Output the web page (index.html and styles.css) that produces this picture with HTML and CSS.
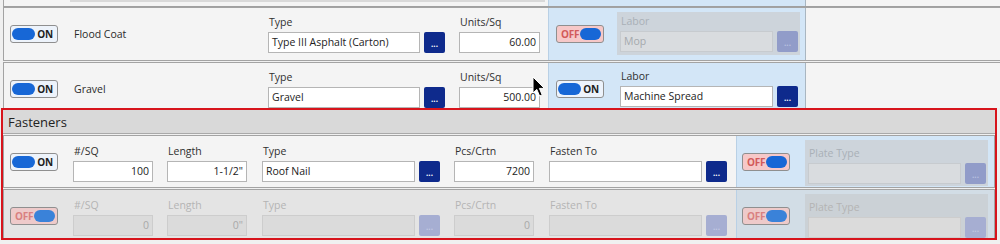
FILE: index.html
```html
<!DOCTYPE html>
<html lang="en">
<head>
<meta charset="UTF-8" />
<title>Roof Components</title>
<link rel="stylesheet" href="styles.css">
</head>
<body>
<div class="stub">
  <div class="stub-gray"></div>
  <div class="stub-panel"></div>
</div>

<!-- Flood Coat -->
<div class="row">
  <div class="toggle on"><span class="knob"></span><span class="state">ON</span></div>
  <div class="name">Flood Coat</div>
  <div class="field">
    <label>Type</label>
    <div class="pick"><div class="input w152">Type III Asphalt (Carton)</div><div class="dots"><span>...</span></div></div>
  </div>
  <div class="field units">
    <label>Units/Sq</label>
    <div class="input w81 num">60.00</div>
  </div>
  <div class="panel">
    <div class="toggle off"><span class="state">OFF</span><span class="knob"></span></div>
    <div class="box field disabled">
      <label>Labor</label>
      <div class="pick"><div class="input w153">Mop</div><div class="dots"><span>...</span></div></div>
    </div>
  </div>
  <div class="rest"></div>
</div>

<!-- Gravel -->
<div class="row-clip">
  <div class="row">
    <div class="toggle on"><span class="knob"></span><span class="state">ON</span></div>
    <div class="name">Gravel</div>
    <div class="field">
      <label>Type</label>
      <div class="pick"><div class="input w152">Gravel</div><div class="dots"><span>...</span></div></div>
    </div>
    <div class="field units">
      <label>Units/Sq</label>
      <div class="input w81 num">500.00</div>
    </div>
    <div class="panel">
      <div class="toggle on"><span class="knob"></span><span class="state">ON</span></div>
      <div class="box field">
        <label>Labor</label>
        <div class="pick"><div class="input w153">Machine Spread</div><div class="dots"><span>...</span></div></div>
      </div>
    </div>
    <div class="rest"></div>
  </div>
</div>

<!-- Fasteners group -->
<div class="fasteners">
  <div class="group-head">Fasteners</div>

  <div class="frow">
    <div class="toggle on"><span class="knob"></span><span class="state">ON</span></div>
    <div class="field f-first">
      <label>#/SQ</label>
      <div class="input w80 num">100</div>
    </div>
    <div class="field f-next">
      <label>Length</label>
      <div class="input w80 num">1-1/2"</div>
    </div>
    <div class="field f-wide">
      <label>Type</label>
      <div class="pick"><div class="input w153">Roof Nail</div><div class="dots"><span>...</span></div></div>
    </div>
    <div class="field f-next">
      <label>Pcs/Crtn</label>
      <div class="input w80 num">7200</div>
    </div>
    <div class="field f-wide">
      <label>Fasten To</label>
      <div class="pick"><div class="input w153"></div><div class="dots"><span>...</span></div></div>
    </div>
    <div class="panel fpanel">
      <div class="toggle off"><span class="state">OFF</span><span class="knob"></span></div>
      <div class="box plate field disabled">
        <label>Plate Type</label>
        <div class="pick"><div class="input w153"></div><div class="dots"><span>...</span></div></div>
      </div>
    </div>
  </div>

  <div class="frow-clip">
    <div class="frow off-row">
      <div class="toggle off"><span class="state">OFF</span><span class="knob"></span></div>
      <div class="field f-first disabled">
        <label>#/SQ</label>
        <div class="input w80 num">0</div>
      </div>
      <div class="field f-next disabled">
        <label>Length</label>
        <div class="input w80 num">0"</div>
      </div>
      <div class="field f-wide disabled">
        <label>Type</label>
        <div class="pick"><div class="input w153"></div><div class="dots"><span>...</span></div></div>
      </div>
      <div class="field f-next disabled">
        <label>Pcs/Crtn</label>
        <div class="input w80 num">0</div>
      </div>
      <div class="field f-wide disabled">
        <label>Fasten To</label>
        <div class="pick"><div class="input w153"></div><div class="dots"><span>...</span></div></div>
      </div>
      <div class="panel fpanel">
        <div class="toggle off"><span class="state">OFF</span><span class="knob"></span></div>
        <div class="box plate field disabled">
          <label>Plate Type</label>
          <div class="pick"><div class="input w153"></div><div class="dots"><span>...</span></div></div>
        </div>
      </div>
    </div>
  </div>
</div>

<!-- mouse pointer -->
<svg class="cursor" width="14" height="22" viewBox="0 0 14 22">
  <path d="M1 1 L1 17 L4.8 13.4 L7.6 20 L10.2 18.9 L7.4 12.4 L12.4 12.4 Z" fill="#000" stroke="#fff" stroke-width="1" stroke-linejoin="round"/>
</svg>
</body>
</html>
```

FILE: styles.css
```css
html, body {
  margin: 0;
  padding: 0;
  overflow: hidden;
}
body {
  position: relative;
  width: 1000px;
  height: 244px;
  background: #f0f0f0;
  font-family: "Open Sans", "Noto Sans", sans-serif;
  font-size: 10.5px;
  color: #262626;
}

/* bottom of the row above */
.stub {
  display: flex;
  height: 6px;
  margin-left: 3px;
  border-left: 1px solid #a5a5a5;
  border-bottom: 1px solid #a0a0a0;
  background: #f4f4f4;
}
.stub-gray {
  margin-left: 66px;
  width: 475px;
  height: 2px;
  background: #d9d9d9;
}
.stub-panel {
  margin-left: 3px;
  width: 256px;
  background: #d3e6f7;
  border-left: 1px solid #b9d0e5;
  border-right: 1px solid #a9b6c1;
}

/* component rows */
.row {
  display: flex;
  align-items: center;
  width: 1000px;
  height: 52px;
  margin-left: 3px;
  border: 1px solid #a3a3a3;
  background: #f4f4f4;
}
.row-clip {
  height: 46px;
  margin-top: 1px;
  overflow: hidden;
}
.row > .toggle {
  margin-left: 6px;
}
.name {
  flex: none;
  width: 194px;
  margin-left: 16px;
  font-size: 10.5px;
  color: #2a2a2a;
}
.units {
  margin-left: 14px;
}
.rest {
  flex: 1;
  align-self: stretch;
}

/* toggles */
.toggle {
  flex: none;
  box-sizing: border-box;
  display: flex;
  align-items: center;
  justify-content: space-between;
  width: 48px;
  height: 18px;
  border: 1px solid #8f8f8f;
  border-radius: 3px;
  font-size: 10px;
  font-weight: 700;
  letter-spacing: -0.2px;
}
.toggle .knob {
  height: 12px;
  border-radius: 6px;
  background: #1767d6;
}
.toggle.on {
  padding: 0 4px 0 1px;
  background: #edf3fb;
  color: #1e1e1e;
}
.toggle.on .knob {
  width: 23px;
}
.toggle.off {
  padding: 0 2px 0 4px;
  background: #f6c8c8;
  color: #d25a5a;
}
.toggle.off .knob {
  width: 21px;
}

/* labelled fields */
.field {
  flex: none;
  display: flex;
  flex-direction: column;
  gap: 2px;
  margin-bottom: 2px;
}
.field label {
  display: block;
  height: 16px;
  line-height: 16px;
  padding-left: 1px;
  color: #303030;
}
.pick {
  display: flex;
  align-items: center;
  gap: 4px;
}
.input {
  box-sizing: border-box;
  height: 21px;
  padding: 0 3px;
  border: 1px solid #b5b5b5;
  background: #fff;
  line-height: 19px;
  white-space: nowrap;
  overflow: hidden;
  color: #222;
}
.num {
  text-align: right;
}
.w80 { width: 80px; }
.w81 { width: 81px; }
.w152 { width: 152px; }
.w153 { width: 153px; }

.dots {
  box-sizing: border-box;
  display: flex;
  align-items: flex-end;
  justify-content: center;
  width: 21px;
  height: 21px;
  padding-bottom: 5px;
  border-radius: 2px;
  background: #0e2a8c;
  color: #fff;
  font-size: 8px;
  line-height: 8px;
  font-weight: 700;
}

/* light blue labor / plate panel */
.panel {
  flex: none;
  box-sizing: border-box;
  display: flex;
  align-items: center;
  align-self: stretch;
  width: 258px;
  margin-left: 8px;
  background: #d3e6f7;
  border-left: 1px solid #b9d0e5;
  border-right: 1px solid #a9b6c1;
}
.panel > .toggle {
  margin-left: 7px;
}
.box {
  margin-left: 13px;
  padding: 1px 2px 3px 3px;
}

/* disabled look */
.box.disabled {
  background: #cdd4db;
}
.disabled label {
  color: #a9b0b7;
}
.disabled .input {
  background: #d9dcdf;
  border-color: #c7cbcf;
  color: #a5a9ad;
}
.disabled .dots {
  background: #919cc9;
  color: #b9c0e0;
}

/* fasteners group */
.fasteners {
  width: 992px;
  margin-left: 1px;
  border: 2px solid #d7141c;
}
.group-head {
  height: 21px;
  padding: 2px 0 0 5px;
  line-height: 21px;
  border-bottom: 1px solid #a9a9a9;
  background: #d9d9d9;
  font-size: 13px;
  color: #222;
}
.frow {
  display: flex;
  align-items: center;
  height: 51px;
  margin-top: 1px;
  border: 1px solid #a3a3a3;
  background: #f4f4f4;
}
.frow > .toggle {
  margin-left: 6px;
}
.frow .field {
  margin: 2px 0 0 0;
}
.frow .f-first { margin-left: 15px; }
.frow .f-next { margin-left: 14px; }
.frow .f-wide { margin-left: 15px; }
.frow-clip {
  height: 49px;
  margin-top: 1px;
  overflow: hidden;
}
.frow-clip .frow {
  margin-top: 0;
}
.fpanel {
  flex: 1;
  width: auto;
  margin-left: 9px;
  border-right: none;
}
.fpanel > .toggle {
  margin-left: 5px;
}
.frow .box.plate {
  margin: 2px 0 0 15px;
  padding: 5px 2px 2px 3px;
}

/* second, switched off fastener row */
.off-row {
  background: #e4e4e4;
}
.off-row label {
  color: #b4b4b4;
}
.off-row .input {
  background: #dbdbdb;
  border-color: #cdcdcd;
  color: #a9a9a9;
}
.off-row .dots {
  background: #a6aed2;
  color: #c3c8e2;
}
.off-row .fpanel {
  background: #d2dde6;
}
.off-row .box.disabled {
  background: #cbd1d6;
}
.off-row .toggle.off {
  background: #eecaca;
  color: #d98080;
}
.off-row .toggle .knob {
  background: #3a82d9;
}

.cursor {
  position: absolute;
  left: 532px;
  top: 76px;
}
```
